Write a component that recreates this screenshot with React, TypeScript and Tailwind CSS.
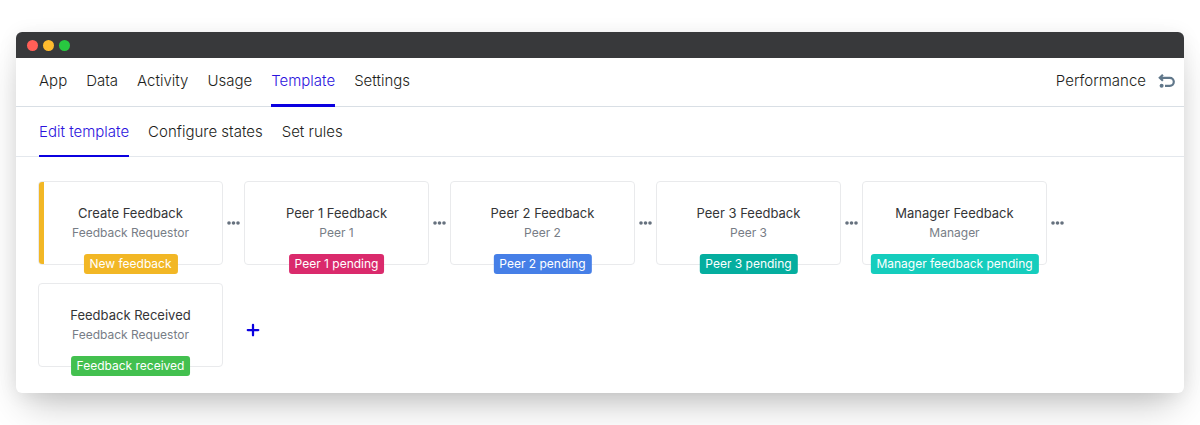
import { Plus } from "lucide-react";

type Step = {
  title: string;
  owner: string;
  state: string;
  color: string;
  first?: boolean;
  last?: boolean;
};

const tabs = ["App", "Data", "Activity", "Usage", "Template", "Settings"];
const subTabs = ["Edit template", "Configure states", "Set rules"];

const steps: Step[] = [
  { title: "Create Feedback", owner: "Feedback Requestor", state: "New feedback", color: "bg-[#f2b725]", first: true },
  { title: "Peer 1 Feedback", owner: "Peer 1", state: "Peer 1 pending", color: "bg-[#da2a6c]" },
  { title: "Peer 2 Feedback", owner: "Peer 2", state: "Peer 2 pending", color: "bg-[#467fe7]" },
  { title: "Peer 3 Feedback", owner: "Peer 3", state: "Peer 3 pending", color: "bg-[#05ae9f]" },
  { title: "Manager Feedback", owner: "Manager", state: "Manager feedback pending", color: "bg-[#15cdbd]" },
  { title: "Feedback Received", owner: "Feedback Requestor", state: "Feedback received", color: "bg-[#43c04f]", last: true },
];

function TabLink({ label, active, bar }: { label: string; active: boolean; bar: string }) {
  return (
    <a
      href="#"
      aria-current={active ? "page" : undefined}
      className={`flex items-center ${bar} ${
        active ? "border-b-[#0b00e0] text-[#2c14dd]" : "border-b-transparent"
      }`}
    >
      {label}
    </a>
  );
}

function StepCard({ step }: { step: Step }) {
  return (
    <li className="flex items-center">
      <article className="relative flex h-[84px] w-[185px] flex-col items-center justify-center rounded border border-[#e9eaec] text-xs leading-5">
        {step.first && <span className="absolute inset-y-0 left-0 w-[5px] rounded-l-[3px] bg-[#f2b725]" />}
        <h2 className="text-[13px] leading-5 text-[#343537]">{step.title}</h2>
        <p className="text-[#777d86]">{step.owner}</p>
        <span
          className={`absolute -bottom-2.5 left-1/2 -translate-x-1/2 rounded-[3px] px-1.5 whitespace-nowrap text-white ${step.color}`}
        >
          {step.state}
        </span>
      </article>
      {!step.last && (
        <button type="button" aria-label={`Options after ${step.title}`} className="flex w-[21px] justify-center">
          <svg viewBox="0 0 13 4" className="h-1 w-[13px] fill-[#66717e]">
            <circle cx="2" cy="2" r="1.8" />
            <circle cx="6.5" cy="2" r="1.8" />
            <circle cx="11" cy="2" r="1.8" />
          </svg>
        </button>
      )}
    </li>
  );
}

export default function App() {
  return (
    <div className="bg-white px-4 pt-8 pb-8 font-['Inter',sans-serif] text-[#343537]">
      <main className="overflow-hidden rounded-md bg-white shadow-[0_20px_36px_-10px_rgba(0,0,0,0.24),0_2px_20px_rgba(0,0,0,0.07)]">
        <div className="flex h-[26px] items-center gap-[5px] bg-[#38393b] px-[11px] pt-px">
          <span className="size-[11px] rounded-full bg-[#ff5f57]" />
          <span className="size-[11px] rounded-full bg-[#febb2e]" />
          <span className="size-[11px] rounded-full bg-[#28c840]" />
        </div>
        <header className="flex h-[49px] justify-between border-b border-[#d9dfe5] pr-[9px] pl-[23px] text-[15px] font-light text-[#1d1e20]">
          <nav aria-label="Main" className="-mb-px flex gap-[19px]">
            {tabs.map((t) => (
              <TabLink key={t} label={t} active={t === "Template"} bar="border-b-3" />
            ))}
          </nav>
          <div className="flex items-center gap-3 pb-0.5">
            <span>Performance</span>
            <button type="button" aria-label="Undo">
              <svg viewBox="0 0 17 14" className="h-3.5 w-[17px] fill-none stroke-[#60778a]" strokeWidth="2.2">
                <path d="M4.9 .8 1.8 3.8 4.9 6.8M2 3.8h9.8a4 4 0 0 1 0 8H7" />
                <circle cx="3.6" cy="11.8" r="2" className="fill-[#60778a] stroke-none" />
              </svg>
            </button>
          </div>
        </header>
        <nav
          aria-label="Template"
          className="flex h-[50px] gap-[19px] border-b border-[#e4e8ed] pl-[23px] text-[15px] font-light text-[#1d1e20]"
        >
          {subTabs.map((t) => (
            <TabLink key={t} label={t} active={t === "Edit template"} bar="-mb-px border-y-2 border-t-transparent" />
          ))}
        </nav>
        <ul className="flex flex-wrap gap-y-[18px] pt-6 pb-[26px] pl-[22px]">
          {steps.map((s) => (
            <StepCard key={s.title} step={s} />
          ))}
          <li className="flex items-center pt-2.5 pl-[21px]">
            <button type="button" aria-label="Add step" className="text-[#0b00e0]">
              <Plus size={18} strokeWidth={3} />
            </button>
          </li>
        </ul>
      </main>
    </div>
  );
}
